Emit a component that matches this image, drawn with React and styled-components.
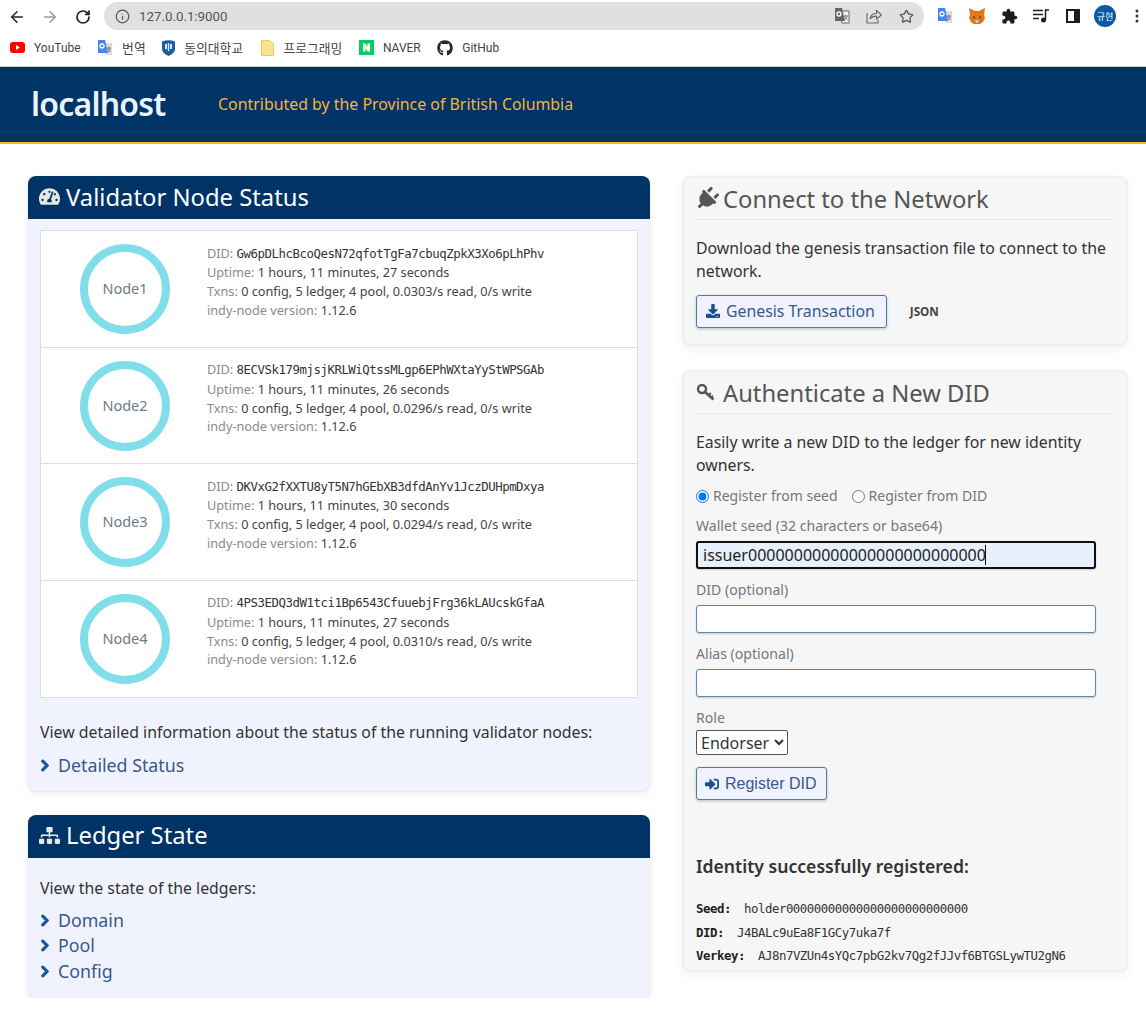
import styled, { createGlobalStyle } from "styled-components";
import { ArrowLeft, ArrowRight, RotateCw, Info, Star } from "lucide-react";
import {
  FaTachometerAlt,
  FaPlug,
  FaSitemap,
  FaDownload,
  FaSignInAlt,
  FaChevronRight,
  FaGithub,
} from "react-icons/fa";

const NODES = [
  { name: "Node1", did: "Gw6pDLhcBcoQesN72qfotTgFa7cbuqZpkX3Xo6pLhPhv", uptime: "27", read: "0.0303" },
  { name: "Node2", did: "8ECVSk179mjsjKRLWiQtssMLgp6EPhWXtaYyStWPSGAb", uptime: "26", read: "0.0296" },
  { name: "Node3", did: "DKVxG2fXXTU8yT5N7hGEbXB3dfdAnYv1JczDUHpmDxya", uptime: "30", read: "0.0294" },
  { name: "Node4", did: "4PS3EDQ3dW1tci1Bp6543CfuuebjFrg36kLAUcskGfaA", uptime: "27", read: "0.0310" },
];

function TranslateIcon({ muted }) {
  return (
    <svg width="16" height="16" viewBox="0 0 16 16">
      <path d="M6 3h9v12H8z" fill={muted ? "#f3f3f3" : "#dcdcdc"} stroke={muted ? "#666" : "none"} />
      <path d="M1 0h7l3 13H1z" fill={muted ? "#666" : "#4285f4"} />
      <circle cx="5" cy="6" r="2" fill="none" stroke="#fff" strokeWidth="1.3" />
      <path d="M10 8h4M12 7v1M10.5 12l3-4M10.5 8.500l3 3.500" stroke="#666" strokeWidth="0.8" fill="none" />
    </svg>
  );
}

function ShareIcon() {
  return (
    <svg width="16" height="16" viewBox="0 0 16 16" fill="none" stroke="#666" strokeWidth="1.1">
      <path d="M1 5v10h11v-3" />
      <path d="M4 11c.5-3.500 3-5.500 6.500-5.500V2.500L15.500 7l-5 4V8.200C8 8 5.500 9 4 11z" />
    </svg>
  );
}

function FoxIcon() {
  return (
    <svg width="16" height="16" viewBox="0 0 16 16">
      <path d="M0 0l6 3h4l6-3-1 7 1 3-2 4-3 2H5l-3-2-2-4 1-3z" fill="#e2761b" />
      <path d="M4 8l2 1-1 2zM12 8l-2 1 1 2z" fill="#233447" />
      <path d="M6 12h4l-1 3H7z" fill="#d7c1b3" />
      <path d="M2 5l3 1-1 2zM14 5l-3 1 1 2z" fill="#f6851b" />
    </svg>
  );
}

function ExtensionIcon() {
  return (
    <svg width="17" height="17" viewBox="0 0 24 24">
      <path
        d="M20.500 11H19V7c0-1.100-.9-2-2-2h-4V3.500a2.500 2.500 0 0 0-5 0V5H4c-1.100 0-2 .9-2 2v3.800h1.500c1.500 0 2.700 1.200 2.700 2.700S5 16.200 3.500 16.200H2V20c0 1.100.9 2 2 2h3.800v-1.500c0-1.500 1.200-2.700 2.700-2.700s2.700 1.200 2.700 2.700V22H17c1.100 0 2-.9 2-2v-4h1.500a2.500 2.500 0 0 0 0-5z"
        fill="#1d1d1f"
      />
    </svg>
  );
}

function YoutubeIcon() {
  return (
    <svg width="15" height="11" viewBox="0 0 15 11">
      <rect width="15" height="11" rx="3" fill="#f00" />
      <path d="M6 3l4 2.500-4 2.500z" fill="#fff" />
    </svg>
  );
}

function ShieldIcon() {
  return (
    <svg width="13" height="16" viewBox="0 0 13 16">
      <path d="M0 1.500Q6.500-1 13 1.500V9q0 4-6.500 7Q0 13 0 9z" fill="#1a5da4" />
      <path d="M3 4h2v5H3zM8 4h2v5H8zM5.800 3h1.400v8H5.800z" fill="#dde8f3" />
    </svg>
  );
}

function FolderIcon() {
  return (
    <svg width="15" height="16" viewBox="0 0 15 16">
      <path d="M1.500.500h8l4 3v12h-12z" fill="#fde293" stroke="#f2c94c" />
    </svg>
  );
}

function NaverIcon() {
  return (
    <svg width="15" height="15" viewBox="0 0 15 15">
      <rect width="15" height="15" fill="#03cf5d" />
      <path d="M4 3.500h2.500l2 3.500v-3.500H11v8H8.500l-2-3.500v3.500H4z" fill="#fff" />
    </svg>
  );
}

function QueueIcon() {
  return (
    <svg width="16" height="14" viewBox="0 0 16 14">
      <path d="M0 1.500h10M0 5.500h10M0 9.500h6" stroke="#222" strokeWidth="1.500" />
      <path d="M12.500 11V1H16" stroke="#222" strokeWidth="1.500" fill="none" />
      <circle cx="10.500" cy="11" r="2.500" fill="#222" />
    </svg>
  );
}

function PanelIcon() {
  return (
    <svg width="14" height="14" viewBox="0 0 14 14">
      <path d="M0 0h14v14H0z" fill="#1d1d1f" />
      <path d="M2 2h6v10H2z" fill="#fff" />
    </svg>
  );
}

function MoreIcon() {
  return (
    <svg width="4" height="14" viewBox="0 0 4 14">
      <circle cx="2" cy="2" r="1.500" fill="#333" />
      <circle cx="2" cy="7" r="1.500" fill="#333" />
      <circle cx="2" cy="12" r="1.500" fill="#333" />
    </svg>
  );
}

function KeyIcon() {
  return (
    <svg width="21" height="19" viewBox="0 0 21 19" fill="none" stroke="#555">
      <circle cx="6" cy="6" r="4" strokeWidth="2.400" />
      <path d="M9 9l8.500 7.500" strokeWidth="2.600" />
      <path d="M12.800 12l2-2M15.300 14.300l1.700-1.700" strokeWidth="1.800" />
    </svg>
  );
}

function NodeRow({ node }) {
  return (
    <Row>
      <Ring>{node.name}</Ring>
      <NodeInfo>
        <InfoLine>
          DID: <Mono>{node.did}</Mono>
        </InfoLine>
        <InfoLine>
          Uptime: <Val>1 hours, 11 minutes, {node.uptime} seconds</Val>
        </InfoLine>
        <InfoLine>
          Txns: <Val>0 config, 5 ledger, 4 pool, {node.read}/s read, 0/s write</Val>
        </InfoLine>
        <InfoLine>
          indy-node version: <Val>1.12.6</Val>
        </InfoLine>
      </NodeInfo>
    </Row>
  );
}

function ArrowLink({ children }) {
  return (
    <LinkRow>
      <FaChevronRight />
      {children}
    </LinkRow>
  );
}

export default function App() {
  return (
    <>
      <GlobalStyle />
      <Toolbar>
        <NavGroup>
          <NavButton>
            <ArrowLeft size={18} strokeWidth={2} />
          </NavButton>
          <NavButton $muted>
            <ArrowRight size={18} strokeWidth={2} />
          </NavButton>
          <NavButton>
            <RotateCw size={16} strokeWidth={2.6} />
          </NavButton>
        </NavGroup>
        <Omnibox>
          <Info size={15} color="#555" />
          <Url>127.0.0.1:9000</Url>
          <OmniIcons>
            <ToolCell>
              <TranslateIcon muted />
            </ToolCell>
            <ToolCell>
              <ShareIcon />
            </ToolCell>
            <ToolCell>
              <Star size={15} color="#555" strokeWidth={2} />
            </ToolCell>
          </OmniIcons>
        </Omnibox>
        <Extensions>
          <ToolCell>
            <TranslateIcon />
          </ToolCell>
          <ToolCell>
            <FoxIcon />
          </ToolCell>
          <ToolCell>
            <ExtensionIcon />
          </ToolCell>
          <ToolCell>
            <QueueIcon />
          </ToolCell>
          <ToolCell>
            <PanelIcon />
          </ToolCell>
          <ToolCell>
            <Avatar>규현</Avatar>
          </ToolCell>
          <ToolCell>
            <MoreIcon />
          </ToolCell>
        </Extensions>
      </Toolbar>
      <Bookmarks>
        <Bookmark>
          <YoutubeIcon />
          YouTube
        </Bookmark>
        <Bookmark $cjk>
          <TranslateIcon />
          번역
        </Bookmark>
        <Bookmark $cjk>
          <ShieldIcon />
          동의대학교
        </Bookmark>
        <Bookmark $cjk>
          <FolderIcon />
          프로그래밍
        </Bookmark>
        <Bookmark>
          <NaverIcon />
          NAVER
        </Bookmark>
        <Bookmark>
          <FaGithub size={16} color="#24292e" />
          GitHub
        </Bookmark>
      </Bookmarks>

      <SiteHeader>
        <Brand>localhost</Brand>
        <Tagline>Contributed by the Province of British Columbia</Tagline>
      </SiteHeader>

      <Main>
        <Column>
          <Panel>
            <PanelHead>
              <FaTachometerAlt size={21} color="#e8e8e0" />
              Validator Node Status
            </PanelHead>
            <PanelBody>
              <NodeTable>
                {NODES.map((node) => (
                  <NodeRow key={node.name} node={node} />
                ))}
              </NodeTable>
              <StatusNote>View detailed information about the status of the running validator nodes:</StatusNote>
              <ArrowLink>Detailed Status</ArrowLink>
            </PanelBody>
          </Panel>
          <Panel>
            <PanelHead>
              <FaSitemap size={21} color="#e8e8e0" />
              Ledger State
            </PanelHead>
            <LedgerBody>
              <LedgerNote>View the state of the ledgers:</LedgerNote>
              <ArrowLink>Domain</ArrowLink>
              <ArrowLink>Pool</ArrowLink>
              <ArrowLink>Config</ArrowLink>
            </LedgerBody>
          </Panel>
        </Column>

        <SideColumn>
          <Well>
            <WellTitle>
              <PlugIcon size={24} />
              Connect to the Network
            </WellTitle>
            <WellText>Download the genesis transaction file to connect to the network.</WellText>
            <ButtonRow>
              <ActionButton>
                <FaDownload size={14} color="#1c4f91" />
                Genesis Transaction
              </ActionButton>
              <JsonTag>JSON</JsonTag>
            </ButtonRow>
          </Well>

          <Well $last>
            <WellTitle>
              <KeyIcon />
              Authenticate a New DID
            </WellTitle>
            <WellText>Easily write a new DID to the ledger for new identity owners.</WellText>
            <RadioRow>
              <RadioLabel>
                <input type="radio" name="mode" defaultChecked />
                Register from seed
              </RadioLabel>
              <RadioLabel>
                <input type="radio" name="mode" />
                Register from DID
              </RadioLabel>
            </RadioRow>
            <FieldLabel>Wallet seed (32 characters or base64)</FieldLabel>
            <FieldWrap>
              <FocusedInput readOnly value="issuer00000000000000000000000000" />
              <Caret />
            </FieldWrap>
            <FieldLabel>DID (optional)</FieldLabel>
            <FieldWrap>
              <TextInput readOnly />
            </FieldWrap>
            <FieldLabel>Alias (optional)</FieldLabel>
            <FieldWrap>
              <TextInput readOnly />
            </FieldWrap>
            <FieldLabel>Role</FieldLabel>
            <RoleSelect defaultValue="Endorser">
              <option>Endorser</option>
            </RoleSelect>
            <RegisterButton>
              <FaSignInAlt size={14} color="#1c4f91" />
              Register DID
            </RegisterButton>
            <ResultTitle>Identity successfully registered:</ResultTitle>
            <ResultBlock>
              <ResultLine>
                <ResultKey>Seed:</ResultKey> holder00000000000000000000000000
              </ResultLine>
              <ResultLine>
                <ResultKey>DID:</ResultKey> J4BALc9uEa8F1GCy7uka7f
              </ResultLine>
              <ResultLine>
                <ResultKey>Verkey:</ResultKey> AJ8n7VZUn4sYQc7pbG2kv7Qg2fJJvf6BTGSLywTU2gN6
              </ResultLine>
            </ResultBlock>
          </Well>
        </SideColumn>
      </Main>
    </>
  );
}

const GlobalStyle = createGlobalStyle`
  body {
    margin: 0;
    background: #fff;
    color: #333;
    font-family: "Noto Sans", "Open Sans", sans-serif;
    font-size: 15.850px;
  }
`;

const Toolbar = styled.div`
  display: flex;
  align-items: center;
  height: 33px;
`;
const NavGroup = styled.div`
  display: flex;
  width: 104px;
  flex: none;
`;
const NavButton = styled.div`
  width: 33px;
  height: 28px;
  display: flex;
  align-items: center;
  justify-content: center;
  color: ${(p) => (p.$muted ? "#999" : "#222")};
`;
const Omnibox = styled.div`
  width: 820px;
  height: 28px;
  flex: none;
  margin-top: -1px;
  box-sizing: border-box;
  padding: 0 2px 0 11px;
  border-radius: 14px;
  background: #e0e0e0;
  display: flex;
  align-items: center;
`;
const Url = styled.span`
  margin-left: 9px;
  font-family: "Roboto", sans-serif;
  font-size: 13.300px;
  color: #555;
`;
const OmniIcons = styled.div`
  margin-left: auto;
  display: flex;
`;
const ToolCell = styled.div`
  width: 32px;
  height: 28px;
  display: flex;
  align-items: center;
  justify-content: center;
`;
const Extensions = styled.div`
  display: flex;
  margin-left: 5px;
  margin-top: -1px;
`;
const Avatar = styled.div`
  width: 22px;
  height: 22px;
  border-radius: 50%;
  background: #0b5aa2;
  color: #fff;
  font-family: "Noto Sans CJK KR", sans-serif;
  font-size: 9px;
  display: flex;
  align-items: center;
  justify-content: center;
`;
const Bookmarks = styled.div`
  height: 33px;
  box-sizing: content-box;
  padding: 0 0 0 10px;
  display: flex;
  align-items: flex-start;
  gap: 16.500px;
  border-bottom: 1px solid #ccc;
`;
const Bookmark = styled.div`
  display: flex;
  align-items: center;
  height: 29px;
  gap: 9px;
  font-family: "Roboto", "Noto Sans CJK KR", sans-serif;
  font-size: ${(p) => (p.$cjk ? "12.800px" : "12px")};
  color: #444;
`;

const SiteHeader = styled.header`
  height: 75px;
  box-sizing: content-box;
  background: #036;
  border-bottom: 2px solid #fcba19;
  display: flex;
  align-items: center;
  padding-left: 31px;
`;
const Brand = styled.div`
  font-size: 32px;
  font-weight: 600;
  letter-spacing: -0.800px;
  line-height: 72px;
  color: #e9f3fb;
  width: 187px;
  margin-top: -2px;
`;
const Tagline = styled.div`
  font-size: 15.900px;
  color: #f3b53c;
  margin-top: -2px;
`;

const Main = styled.main`
  display: grid;
  grid-template-columns: 622px 446px;
  column-gap: 32px;
  padding: 32px 18px 0 28px;
`;
const Column = styled.div`
  display: flex;
  flex-direction: column;
  gap: 24px;
`;
const SideColumn = styled.div`
  display: flex;
  flex-direction: column;
  gap: 24px;
`;

const Panel = styled.section`
  background: #f0f3fe;
  border-radius: 8px;
  box-shadow: 0 1px 2px #dfe3f0, 0 3px 10px #f2f2f2;
  overflow: hidden;
`;
const PanelHead = styled.h2`
  margin: 0;
  height: 43px;
  padding: 0 0 2px 11px;
  box-sizing: border-box;
  background: #036;
  color: #fff;
  font-size: 23.800px;
  font-weight: 400;
  display: flex;
  align-items: center;
  gap: 6px;
`;
const PanelBody = styled.div`
  padding: 11px 12px 12px;
`;
const LedgerBody = styled(PanelBody)`
  padding-bottom: 14px;
`;
const NodeTable = styled.div`
  background: #fff;
  border: 1px solid #ddd;
`;
const Row = styled.div`
  height: 116.500px;
  display: flex;
  border-bottom: 1px solid #ddd;
  box-sizing: border-box;

  &:last-child {
    border-bottom: 0;
  }
`;
const Ring = styled.div`
  width: 90px;
  height: 90px;
  box-sizing: border-box;
  margin: 13px 37px 0 39px;
  padding-bottom: 2px;
  border: 8px solid #80deea;
  border-radius: 50%;
  display: flex;
  align-items: center;
  justify-content: center;
  flex: none;
  font-size: 14.500px;
  color: #6c7a89;
`;
const NodeInfo = styled.div`
  padding-top: 12.600px;
`;
const InfoLine = styled.div`
  font-size: 12.700px;
  line-height: 18.700px;
  color: #8a8a8a;
`;
const Val = styled.span`
  color: #444;
`;
const Mono = styled.span`
  font-family: "DejaVu Sans Mono", monospace;
  font-size: 12.400px;
  letter-spacing: -0.470px;
  color: #333;
`;

const StatusNote = styled.p`
  margin: 22px 0 9px;
  line-height: 24px;
  color: #333;
`;
const LedgerNote = styled.p`
  margin: 7px 0 8px;
  line-height: 24px;
  color: #333;
`;
const LinkRow = styled.div`
  display: flex;
  align-items: center;
  gap: 8px;
  font-size: 17.800px;
  line-height: 25.500px;
  color: #38598b;

  svg {
    width: 10px;
    height: 13px;
    color: #1c5a94;
    stroke: currentColor;
    stroke-width: 45px;
  }
`;

const Well = styled.section`
  background: #f6f6f6;
  border: 2px solid #f0eeee;
  border-radius: 8px;
  box-shadow: 0 3px 10px #f2f2f2;
  padding: 5px 12px 0;
  box-sizing: border-box;
  height: ${(p) => (p.$last ? "602px" : "170px")};
  overflow: hidden;
`;
const WellTitle = styled.h2`
  margin: 0;
  padding-bottom: 5px;
  height: 37px;
  box-sizing: border-box;
  border-bottom: 1px solid #e6e6e6;
  font-size: 23.750px;
  font-weight: 400;
  color: #555;
  display: flex;
  align-items: center;
  gap: 6px;
`;
const PlugIcon = styled(FaPlug)`
  color: #555;
  margin: 0 -2px 0 -1px;
  transform: rotate(45deg);
`;
const WellText = styled.p`
  margin: 17px 0 0;
  line-height: 23px;
  color: #333;
`;
const ButtonRow = styled.div`
  margin-top: 12px;
  display: flex;
  align-items: center;
  gap: 23px;
`;
const ActionButton = styled.button`
  height: 33px;
  padding: 0 11px 1px 9px;
  display: flex;
  align-items: center;
  gap: 6px;
  background: #f0f3fe;
  border: 1px solid #4b7da8;
  border-radius: 3px;
  box-shadow: 0 1px 3px #bbb;
  color: #38598b;
  font-family: "Noto Sans", sans-serif;
  font-size: 15.850px;
`;
const RegisterButton = styled(ActionButton)`
  margin-top: 12px;
  padding: 0 9px 0 8px;
  font-family: "Liberation Sans", sans-serif;
  font-size: 16px;
`;
const JsonTag = styled.span`
  font-size: 11.700px;
  font-weight: 700;
  color: #444;
  margin-top: -1px;
`;
const RadioRow = styled.div`
  margin-top: 9px;
  display: flex;
  gap: 14px;
`;
const RadioLabel = styled.label`
  display: flex;
  align-items: center;
  gap: 4px;
  font-size: 14px;
  line-height: 20px;
  color: #777;

  input {
    margin: 0;
    width: 13px;
    height: 13px;
  }
`;
const FieldLabel = styled.div`
  font-size: 14.100px;
  line-height: 20px;
  margin-top: 10px;
  color: #777;
`;
const FieldWrap = styled.div`
  position: relative;
  width: 400px;
  margin-top: 5px;
  margin-bottom: 11px;
`;
const TextInput = styled.input`
  display: block;
  width: 100%;
  height: 28px;
  box-sizing: border-box;
  background: #fff;
  border: 1px solid #5f88aa;
  border-radius: 3px;
  box-shadow: 0 1px 2px #ccc;
  outline: none;
`;
const FocusedInput = styled(TextInput)`
  background: #e8f0fe;
  border: 2px solid #111;
  padding: 0 5px;
  font-family: "Noto Sans", sans-serif;
  font-size: 16px;
  color: #222;
`;
const Caret = styled.span`
  position: absolute;
  left: 289px;
  top: 4px;
  width: 1px;
  height: 20px;
  background: #111;
`;
const RoleSelect = styled.select`
  display: block;
  margin-top: 2px;
  width: 92px;
  height: 25px;
  background: #fff;
  border: 1px solid #555;
  border-radius: 2px;
  font-family: "Noto Sans", sans-serif;
  font-size: 16px;
  color: #333;
`;
const ResultTitle = styled.h3`
  margin: 54px 0 0;
  font-size: 17.600px;
  font-weight: 600;
  line-height: 24px;
  color: #333;
`;
const ResultBlock = styled.div`
  margin-top: 19px;
`;
const ResultLine = styled.div`
  font-family: "DejaVu Sans Mono", monospace;
  font-size: 12.400px;
  letter-spacing: -0.470px;
  line-height: 23.500px;
  height: 23.500px;
  color: #333;
`;
const ResultKey = styled.strong`
  margin-right: 6px;
  color: #222;
`;
